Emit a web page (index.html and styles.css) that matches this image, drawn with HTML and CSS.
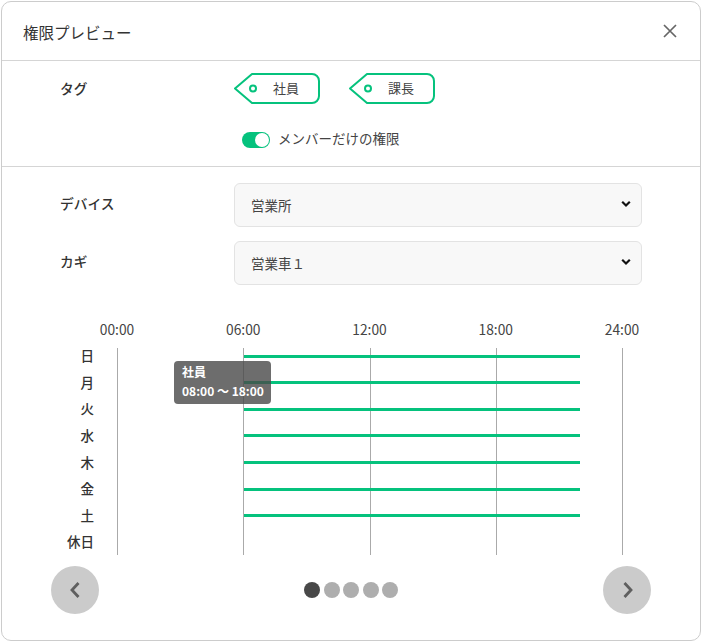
FILE: index.html
```html
<!DOCTYPE html>
<html lang="ja">
<head>
<meta charset="utf-8">
<title>権限プレビュー</title>
<link rel="stylesheet" href="styles.css">
</head>
<body>
<div class="modal">
  <header class="modal-head">
    <h1 class="modal-title">権限プレビュー</h1>
    <svg class="close" width="14" height="14" viewBox="0 0 14 14"><path d="M1 1L13 13M13 1L1 13" stroke="#666" stroke-width="1.7" fill="none"/></svg>
  </header>
  <section class="tags-section">
    <div class="tag-row">
      <div class="field-label tag-label">タグ</div>
      <div class="tags">
        <div class="tag">
          <svg class="tag-shape" width="88" height="32" viewBox="0 0 88 32"><path d="M19 1H79a7 7 0 0 1 7 7V23a7 7 0 0 1-7 7H19L2 15.500Z" fill="#fff" stroke="#05c27d" stroke-width="2" stroke-linejoin="round"/><circle cx="20" cy="15.500" r="3" fill="none" stroke="#05c27d" stroke-width="2"/></svg>
          <span class="tag-text">社員</span>
        </div>
        <div class="tag">
          <svg class="tag-shape" width="88" height="32" viewBox="0 0 88 32"><path d="M19 1H79a7 7 0 0 1 7 7V23a7 7 0 0 1-7 7H19L2 15.500Z" fill="#fff" stroke="#05c27d" stroke-width="2" stroke-linejoin="round"/><circle cx="20" cy="15.500" r="3" fill="none" stroke="#05c27d" stroke-width="2"/></svg>
          <span class="tag-text">課長</span>
        </div>
      </div>
    </div>
    <div class="toggle-row">
      <span class="toggle"><span class="knob"></span></span>
      <span class="toggle-label">メンバーだけの権限</span>
    </div>
  </section>
  <section class="form-section">
    <div class="form-row">
      <div class="field-label">デバイス</div>
      <div class="select"><span>営業所</span><svg width="10" height="8" viewBox="0 0 10 8"><path d="M1.200 1.800L5 5.500L8.800 1.800" stroke="#111" stroke-width="2.200" fill="none"/></svg></div>
    </div>
    <div class="form-row">
      <div class="field-label">カギ</div>
      <div class="select"><span>営業車１</span><svg width="10" height="8" viewBox="0 0 10 8"><path d="M1.200 1.800L5 5.500L8.800 1.800" stroke="#111" stroke-width="2.200" fill="none"/></svg></div>
    </div>
  </section>
  <section class="chart">
    <div class="hours">
      <span class="hour">00:00</span><span class="hour">06:00</span><span class="hour">12:00</span><span class="hour">18:00</span><span class="hour">24:00</span>
    </div>
    <div class="chart-body">
      <div class="days">
        <span>日</span><span>月</span><span>火</span><span>水</span><span>木</span><span>金</span><span>土</span><span>休日</span>
      </div>
      <div class="plot">
        <div class="gridlines"><i></i><i></i><i></i><i></i><i></i></div>
        <div class="bars">
          <div class="bar-row"><div class="bar"></div></div>
          <div class="bar-row"><div class="bar"></div></div>
          <div class="bar-row"><div class="bar"></div></div>
          <div class="bar-row"><div class="bar"></div></div>
          <div class="bar-row"><div class="bar"></div></div>
          <div class="bar-row"><div class="bar"></div></div>
          <div class="bar-row"><div class="bar"></div></div>
          <div class="bar-row"></div>
        </div>
        <div class="tooltip">社員<br>08:00 ～ 18:00</div>
      </div>
    </div>
  </section>
  <nav class="pager">
    <button class="round"><svg width="12" height="18" viewBox="0 0 12 18"><path d="M9.500 2L3 9L9.500 16" stroke="#5f5f5f" stroke-width="2.800" fill="none"/></svg></button>
    <div class="dots"><i class="dot active"></i><i class="dot"></i><i class="dot"></i><i class="dot"></i><i class="dot"></i></div>
    <button class="round"><svg class="next-icon" width="12" height="18" viewBox="0 0 12 18"><path d="M2.500 2L9 9L2.500 16" stroke="#5f5f5f" stroke-width="2.800" fill="none"/></svg></button>
  </nav>
</div>
</body>
</html>
```
FILE: styles.css
```css
* { box-sizing: border-box; }
html, body { margin: 0; padding: 0; }
body {
  width: 702px;
  height: 642px;
  padding: 1px;
  background: #fff;
  font-family: "Noto Sans CJK JP", "Noto Sans", sans-serif;
  font-size: 14px;
  color: #333;
  overflow: hidden;
}
.modal {
  width: 700px;
  height: 640px;
  background: #fff;
  border: 1px solid #ccc;
  border-radius: 10px;
}
.modal-head {
  height: 59px;
  border-bottom: 1px solid #d5d5d5;
  display: flex;
  align-items: center;
  justify-content: space-between;
  padding: 0 23px 0 21px;
}
.modal-title {
  margin: 0;
  font-size: 15.500px;
  font-weight: 400;
  line-height: 24px;
  padding-top: 1px;
}
.close { margin-top: -1px; }
.tags-section {
  height: 106px;
  border-bottom: 1px solid #d5d5d5;
  padding-top: 12px;
}
.tag-row { display: flex; align-items: center; height: 32px; }
.field-label {
  width: 232px;
  padding-left: 58px;
  font-size: 13.700px;
  font-weight: 500;
  color: #333;
}
.field-label.tag-label { width: 231px; padding-bottom: 2px; }
.tags { display: flex; gap: 27px; }
.tag { position: relative; width: 88px; height: 32px; display: flex; align-items: center; }
.tag-shape { display: block; }
.tag-text {
  position: absolute;
  left: 40px;
  top: 4px;
  font-size: 13px;
  line-height: 21px;
  color: #444;
}
.toggle-row {
  display: flex;
  align-items: center;
  gap: 8px;
  margin-top: 24px;
  padding-left: 240px;
}
.toggle {
  width: 28px;
  height: 16px;
  margin-top: 1px;
  border-radius: 8px;
  background: #05c27d;
  display: flex;
  justify-content: flex-end;
  padding: 1px;
}
.knob { width: 14px; height: 14px; border-radius: 50%; background: #fff; }
.toggle-label { font-size: 13.500px; line-height: 18px; color: #444; padding-bottom: 2px; }
.form-section { padding-top: 16px; display: flex; flex-direction: column; gap: 14px; }
.form-row { display: flex; align-items: center; height: 44px; }
.form-row .field-label { padding-bottom: 4px; }
.select {
  width: 408px;
  height: 44px;
  background: #f8f8f8;
  border: 1px solid #e3e3e3;
  border-radius: 6px;
  display: flex;
  align-items: center;
  justify-content: space-between;
  padding: 0 10px 0 16px;
  font-size: 13.500px;
  color: #444;
}
.select svg { margin-top: -3px; }
.chart { margin-top: 30px; }
.hours {
  display: flex;
  height: 33px;
  padding: 0 0 5px 90px;
  width: 645px;
  justify-content: space-between;
  align-items: center;
}
.hour { width: 50px; text-align: center; font-size: 13.800px; line-height: 20px; color: #444; }
.chart-body { display: flex; height: 207px; }
.days {
  width: 115px;
  height: 213px;
  margin-top: -6px;
  padding-right: 23px;
  display: grid;
  grid-template-rows: repeat(8, 26.600px);
  justify-items: end;
  align-items: center;
  font-size: 13.500px;
  font-weight: 500;
  color: #333;
}
.plot { position: relative; width: 506px; height: 207px; }
.gridlines {
  position: absolute;
  inset: 0;
  display: flex;
  justify-content: space-between;
}
.gridlines i { width: 1px; background: #aaa; }
.bars {
  position: absolute;
  top: -4.600px;
  left: 0;
  right: 0;
  display: grid;
  grid-template-rows: repeat(8, 26.600px);
  align-items: center;
}
.bar-row { height: 3px; margin-top: -1px; }
.bar { height: 3px; margin-left: 25%; width: 66.500%; background: #05c27d; }
.tooltip {
  position: absolute;
  left: 57px;
  top: 13px;
  width: 97px;
  height: 43px;
  padding: 2px 8px;
  border-radius: 4px;
  background: rgba(72, 72, 72, 0.8);
  color: #fff;
  font-size: 12px;
  font-weight: 700;
  line-height: 18.500px;
  white-space: nowrap;
}
.pager {
  display: flex;
  align-items: center;
  justify-content: space-between;
  padding: 0 49px;
  margin-top: 11px;
}
.round {
  width: 48px;
  height: 48px;
  border: 0;
  padding: 0;
  border-radius: 50%;
  background: #cbcbcb;
  display: flex;
  align-items: center;
  justify-content: center;
}
.next-icon { margin-left: 2px; }
.dots { display: flex; gap: 3.500px; }
.dot { width: 16px; height: 16px; border-radius: 50%; background: #aeaeae; }
.dot.active { background: #484848; }
```
